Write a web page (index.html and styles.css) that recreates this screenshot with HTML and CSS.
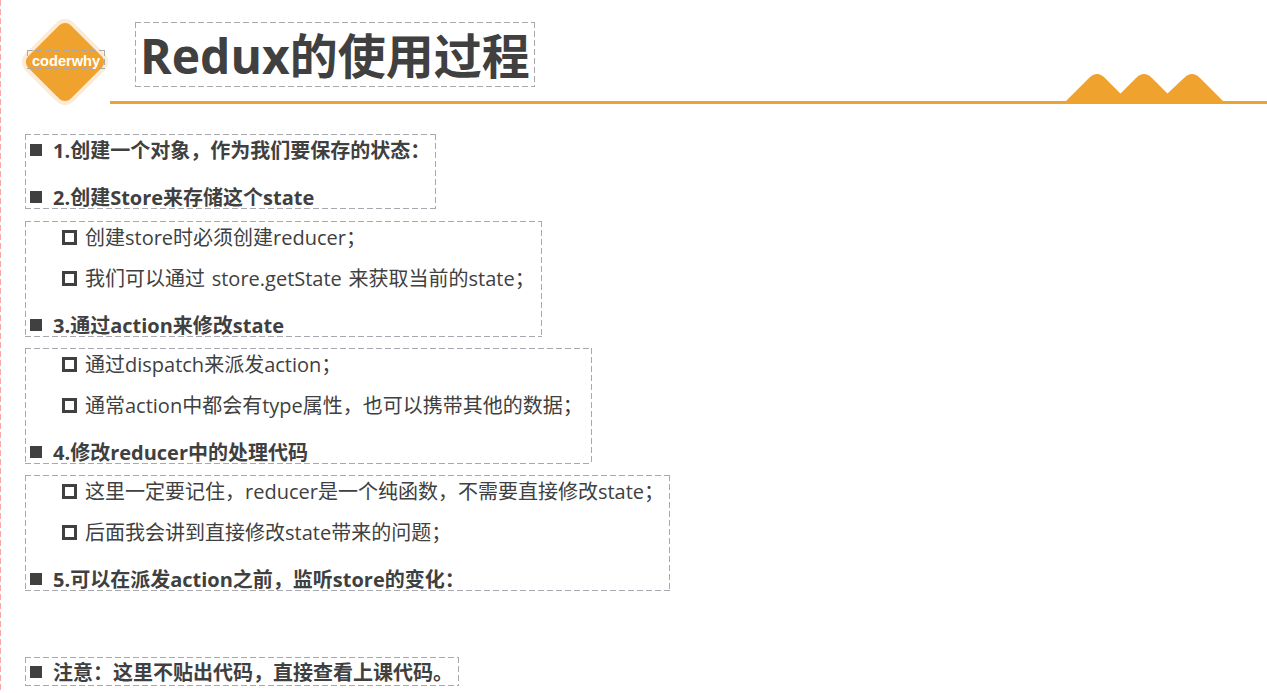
FILE: index.html
```html
<!DOCTYPE html>
<html lang="zh">
<head>
<meta charset="utf-8">
<title>Redux的使用过程</title>
<link rel="stylesheet" href="styles.css">
</head>
<body>
<div class="slide">
  <header class="header">
    <div class="logo">
      <svg class="logo-mark" width="86" height="86" viewBox="0 0 86 86" aria-hidden="true">
        <rect x="11" y="11" width="64" height="64" rx="10" transform="rotate(45 43 43)" fill="#f0a22e" stroke="#fcebd6" stroke-width="4"/>
      </svg>
      <span class="logo-text dash">coderwhy</span>
    </div>
    <h1 class="title dash">Redux的使用过程</h1>
  </header>
  <div class="rule">
    <svg class="hills" width="163" height="30" viewBox="-3 0 163 30" aria-hidden="true">
      <path d="M-3 30 L23 4 Q31 -4 39 4 L54.5 19.5 L70 4 Q78 -4 86 4 L101.5 19.5 L118 4 Q126 -4 134 4 L160 30 Z" fill="#f0a22e"/>
    </svg>
  </div>
  <main class="content">
    <section class="box dash box-1">
      <p class="item"><span class="b-fill"></span>1.创建一个对象，作为我们要保存的状态：</p>
      <p class="item"><span class="b-fill"></span>2.创建Store来存储这个state</p>
    </section>
    <section class="box dash box-2">
      <p class="sub"><span class="b-open"></span>创建store时必须创建reducer；</p>
      <p class="sub"><span class="b-open"></span>我们可以通过 store.getState 来获取当前的state；</p>
      <p class="item"><span class="b-fill"></span>3.通过action来修改state</p>
    </section>
    <section class="box dash box-3">
      <p class="sub"><span class="b-open"></span>通过dispatch来派发action；</p>
      <p class="sub"><span class="b-open"></span>通常action中都会有type属性，也可以携带其他的数据；</p>
      <p class="item"><span class="b-fill"></span>4.修改reducer中的处理代码</p>
    </section>
    <section class="box dash box-4">
      <p class="sub"><span class="b-open"></span>这里一定要记住，reducer是一个纯函数，不需要直接修改state；</p>
      <p class="sub"><span class="b-open"></span>后面我会讲到直接修改state带来的问题；</p>
      <p class="item"><span class="b-fill"></span>5.可以在派发action之前，监听store的变化：</p>
    </section>
    <section class="box dash box-5">
      <p class="item"><span class="b-fill"></span>注意：这里不贴出代码，直接查看上课代码。</p>
    </section>
  </main>
</div>
</body>
</html>
```
FILE: styles.css
```css
* { box-sizing: border-box; }
html, body { margin: 0; height: 100%; overflow: hidden; background: #fff; }
body { font-family: "Open Sans", "Noto Sans CJK SC", sans-serif; color: #404040; }
.slide {
  width: 1267px;
  height: 693px;
  padding-top: 18px;
  padding-left: 1px;
  overflow: hidden;
  background: repeating-linear-gradient(180deg, #f7a8a8 0 6px, transparent 6px 9px) left top / 1px 100% no-repeat;
}
.dash {
  border: 1px solid transparent;
  background-image:
    repeating-linear-gradient(90deg, #a8a8b0 0 6px, transparent 6px 9px),
    repeating-linear-gradient(90deg, #a8a8b0 0 6px, transparent 6px 9px),
    repeating-linear-gradient(180deg, #a8a8b0 0 6px, transparent 6px 9px),
    repeating-linear-gradient(180deg, #a8a8b0 0 6px, transparent 6px 9px);
  background-size: 100% 1px, 100% 1px, 1px 100%, 1px 100%;
  background-position: left top, left bottom, left top, right top;
  background-repeat: no-repeat;
  background-origin: border-box;
  background-clip: border-box;
}
.header { display: flex; align-items: flex-start; height: 83px; }
.logo { position: relative; width: 86px; height: 86px; margin: 1px 0 0 21px; flex: none; }
.logo-mark { display: block; }
.logo-text {
  position: absolute;
  left: 5px; top: 31px;
  width: 78px; height: 19px;
  padding-top: 2px;
  color: #fff;
  font: bold 14.6px/17px "Liberation Sans", sans-serif;
  text-align: center;
}
.title {
  margin: 4px 0 0 27px;
  padding: 0 4px;
  height: 65px;
  font-size: 48px;
  line-height: 66px;
  font-weight: 700;
  white-space: nowrap;
}
.rule { position: relative; height: 3px; margin-left: 109px; background: #f0a22e; }
.hills { position: absolute; right: 41px; bottom: 0; }
.content { padding: 30px 0 0 24px; display: flex; flex-direction: column; align-items: flex-start; }
.box { padding: 4px 5px 0 0; }
.box-2 { margin-top: 12px; padding-right: 6px; }
.box-3 { margin-top: 11px; padding-right: 8px; }
.box-4 { margin-top: 11px; }
.box-5 { margin-top: 66px; padding-top: 3px; padding-bottom: 2px; }
.item, .sub { margin: 0; display: flex; align-items: center; white-space: nowrap; font-size: 20px; height: 22px; padding-bottom: 2px; }
.item { font-weight: 700; }
.box-1 .item + .item { margin-top: 25px; }
.sub { margin-bottom: 19px; word-spacing: 1.5px; }
.sub + .item { margin-top: 25px; }
.b-fill { width: 12px; height: 12px; background: #404040; margin: 2px 11px 0 4px; flex: none; }
.b-open { width: 15px; height: 15px; border: 3px solid #404040; margin: 2px 8px 0 36px; flex: none; }
```
